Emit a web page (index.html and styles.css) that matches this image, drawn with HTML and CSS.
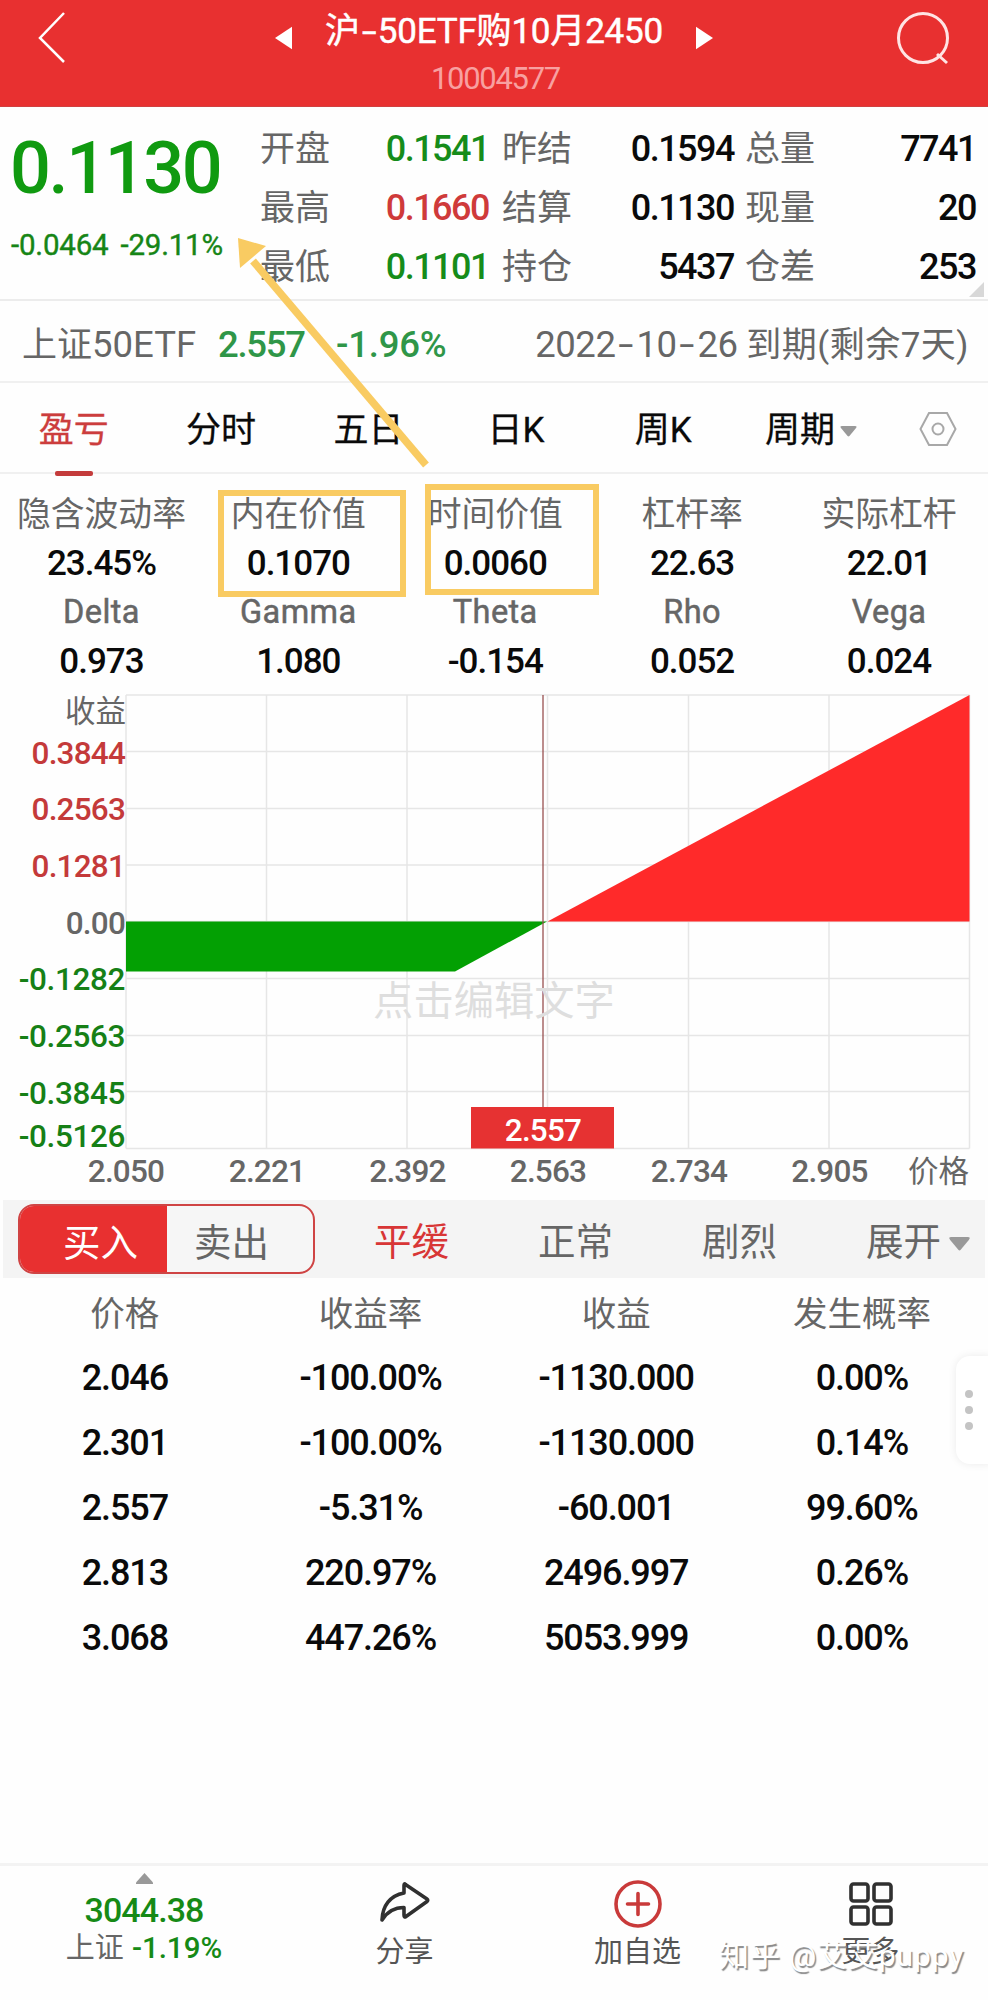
FILE: index.html
```html
<!DOCTYPE html>
<html lang="zh-CN">
<head>
<meta charset="utf-8">
<title>沪-50ETF购10月2450</title>
<link rel="stylesheet" href="styles.css">
</head>
<body>
<div class="screen">
  <header class="topbar">
    <svg class="back" viewBox="0 0 30 54"><path d="M27 2 3 27 27 51"/></svg>
    <div class="heading">
      <div class="title-row">
        <svg class="tri" viewBox="0 0 18 24"><path d="M18 0v24L0 12z"/></svg>
        <h1 class="title">沪<span class="dash">-</span>50ETF购10月2450</h1>
        <svg class="tri" viewBox="0 0 18 24"><path d="M0 0v24l18-12z"/></svg>
      </div>
      <div class="code">10004577</div>
    </div>
    <svg class="search" viewBox="0 0 54 54"><circle cx="27" cy="27" r="24.5"/><path d="m41 43 10 9"/></svg>
  </header>

  <section class="quote">
    <div class="price-block">
      <div class="price">0.1130</div>
      <div class="change"><span>-0.0464</span><span>-29.11%</span></div>
    </div>
    <dl class="stats">
      <dt>开盘</dt><dd class="down">0.1541</dd><dt>昨结</dt><dd>0.1594</dd><dt>总量</dt><dd>7741</dd>
      <dt>最高</dt><dd class="up">0.1660</dd><dt>结算</dt><dd>0.1130</dd><dt>现量</dt><dd>20</dd>
      <dt>最低</dt><dd class="down">0.1101</dd><dt>持仓</dt><dd>5437</dd><dt>仓差</dt><dd>253</dd>
    </dl>
    <svg class="corner" viewBox="0 0 15 15"><path d="M15 0v15H0z"/></svg>
  </section>

  <section class="underlying">
    <span class="u-name">上证<span class="latin">50ETF</span></span>
    <span class="u-price">2.557</span>
    <span class="u-rate">-1.96%</span>
    <span class="u-expiry"><span class="u-date">2022<span class="dash">-</span>10<span class="dash">-</span>26</span> <span class="u-left">到期(剩余7天)</span></span>
  </section>

  <nav class="tabs">
    <span class="tab active">盈亏</span>
    <span class="tab">分时</span>
    <span class="tab">五日</span>
    <span class="tab">日K</span>
    <span class="tab">周K</span>
    <span class="tab period">周期<svg class="caret" viewBox="0 0 18 12"><path d="M2 0h14q3 0 1 2.500l-7 8.500q-1 1-2 0l-7-8.500Q-1 0 2 0z"/></svg></span>
    <svg class="hex" viewBox="0 0 38 36"><path d="M10 2h18l8.500 16L28 34H10L1.500 18z"/><circle cx="19" cy="18" r="5.500"/></svg>
  </nav>

  <section class="metrics">
    <span class="label">隐含波动率</span><span class="label">内在价值</span><span class="label">时间价值</span><span class="label">杠杆率</span><span class="label">实际杠杆</span>
    <span class="num">23.45%</span><span class="num">0.1070</span><span class="num">0.0060</span><span class="num">22.63</span><span class="num">22.01</span>
    <span class="label en">Delta</span><span class="label en">Gamma</span><span class="label en">Theta</span><span class="label en">Rho</span><span class="label en">Vega</span>
    <span class="num">0.973</span><span class="num">1.080</span><span class="num">-0.154</span><span class="num">0.052</span><span class="num">0.024</span>
  </section>

  <svg class="chart" viewBox="0 686 988 514">
    <path class="grid" d="M126 695H969.500M126 751.500H969.500M126 808.500H969.500M126 865H969.500M126 921.500H969.500M126 978.500H969.500M126 1035.500H969.500M126 1091.500H969.500M126 1148.500H969.500M126 695V1148.500M266.500 695V1148.500M407 695V1148.500M547.500 695V1148.500M688.500 695V1148.500M829 695V1148.500M969.500 695V1148.500"/>
    <path class="loss" d="M126 921.500H547L455 971.500H126z"/>
    <path class="gain" d="M547.500 921.500 969.500 695V921.500z"/>
    <path class="cursor" d="M543 695V1108"/>
    <text class="ghost" x="494" y="1015">点击编辑文字</text>
    <rect class="badge" x="471" y="1107" width="143" height="41.500"/>
    <text class="badge-text" x="543" y="1141">2.557</text>
    <g class="yaxis">
      <text class="cjk" x="126" y="722">收益</text>
      <text class="pos" x="125" y="764">0.3844</text>
      <text class="pos" x="125" y="820">0.2563</text>
      <text class="pos" x="125" y="877">0.1281</text>
      <text x="125" y="934">0.00</text>
      <text class="neg" x="125" y="990">-0.1282</text>
      <text class="neg" x="125" y="1047">-0.2563</text>
      <text class="neg" x="125" y="1104">-0.3845</text>
      <text class="neg" x="125" y="1147">-0.5126</text>
    </g>
    <g class="xaxis">
      <text x="126" y="1182">2.050</text>
      <text x="267" y="1182">2.221</text>
      <text x="407.500" y="1182">2.392</text>
      <text x="548" y="1182">2.563</text>
      <text x="689" y="1182">2.734</text>
      <text x="829.500" y="1182">2.905</text>
      <text class="cjk" x="938.500" y="1182">价格</text>
    </g>
  </svg>

  <section class="modes">
    <div class="segment"><span class="buy">买入</span><span class="sell">卖出</span></div>
    <span class="mode on">平缓</span>
    <span class="mode">正常</span>
    <span class="mode">剧烈</span>
    <span class="mode expand">展开<svg class="caret big" viewBox="0 0 18 12"><path d="M2 0h14q3 0 1 2.500l-7 8.500q-1 1-2 0l-7-8.500Q-1 0 2 0z"/></svg></span>
  </section>

  <section class="table">
    <div class="row head"><span>价格</span><span>收益率</span><span>收益</span><span>发生概率</span></div>
    <div class="row"><span>2.046</span><span>-100.00%</span><span>-1130.000</span><span>0.00%</span></div>
    <div class="row"><span>2.301</span><span>-100.00%</span><span>-1130.000</span><span>0.14%</span></div>
    <div class="row"><span>2.557</span><span>-5.31%</span><span>-60.001</span><span>99.60%</span></div>
    <div class="row"><span>2.813</span><span>220.97%</span><span>2496.997</span><span>0.26%</span></div>
    <div class="row"><span>3.068</span><span>447.26%</span><span>5053.999</span><span>0.00%</span></div>
  </section>

  <footer class="bottom">
    <div class="index">
      <svg class="up-caret" viewBox="0 0 17 11"><path d="M8.500 0 17 9.500V11H0V9.500z"/></svg>
      <div class="index-value">3044.38</div>
      <div class="index-rate"><span>上证</span><b>-1.19%</b></div>
    </div>
    <div class="action share">
      <svg viewBox="0 0 50 48"><path d="M25.500 4.500Q24 3 24 5.500V13C10 15.500 2.500 26 2 40c5-8 12-12.500 22-12.500V35q0 3 2 1.500L47 21.500q1.500-1.500 0-2.500z"/></svg>
      <span>分享</span>
    </div>
    <div class="action add">
      <svg viewBox="0 0 50 48"><circle cx="25" cy="24" r="22"/><path d="M25 13.500v21M14.500 24h21"/></svg>
      <span>加自选</span>
    </div>
    <div class="action more">
      <svg viewBox="0 0 50 48"><rect x="5" y="4" width="17" height="17" rx="2.500"/><rect x="28" y="4" width="17" height="17" rx="2.500"/><rect x="5" y="27" width="17" height="17" rx="2.500"/><rect x="28" y="27" width="17" height="17" rx="2.500"/></svg>
      <span>更多</span>
    </div>
  </footer>

  <div class="handle"><i></i><i></i><i></i></div>
  <div class="mark intrinsic"></div>
  <div class="mark time"></div>
  <svg class="arrow" viewBox="0 0 200 240"><path class="shaft" d="M190 230 17 26"/><path class="tip" d="M2 3 30 11 4 33z"/></svg>
  <div class="watermark">知乎 @艾艾puppy</div>
</div>
</body>
</html>
```
FILE: styles.css
```css
* { box-sizing: border-box; }
body { margin: 0; background: #fff; }
.screen {
  position: relative;
  width: 988px;
  height: 2000px;
  overflow: hidden;
  background: #fefefe;
  color: #0a0a0a;
  font-family: Roboto, "Noto Sans CJK SC", sans-serif;
  font-size: 35px;
  line-height: 1;
  white-space: nowrap;
  display: flex;
  flex-direction: column;
}
.screen > * { flex-shrink: 0; }
svg { display: block; }
.dash { display: inline-block; width: 21px; text-align: center; transform: scaleX(1.5); }

/* header */
.topbar { height: 107px; background: #e83030; border-bottom: 1px solid #d04040; color: #fff; display: flex; justify-content: space-between; padding: 11px 38px 0 37px; }
.back { width: 30px; height: 54px; fill: none; stroke: #fff; stroke-width: 2.5; }
.search { width: 54px; height: 54px; fill: none; stroke: #ffe4e4; stroke-width: 3; }
.heading { display: flex; flex-direction: column; align-items: center; margin-left: 25px; }
.title-row { display: flex; align-items: center; justify-content: space-between; width: 438px; height: 42px; }
.title { margin: 0; font-size: 35px; font-weight: 400; -webkit-text-stroke: .5px #fff; letter-spacing: -.2px; line-height: 44px; }
.title .dash { width: 18px; }
.tri { width: 17px; height: 24px; fill: #fff; margin-top: 12px; }
.code { font-size: 31px; letter-spacing: -1.3px; line-height: 34px; margin-top: 9px; padding-left: 3px; color: #f8a0a0; }

/* quote */
.quote { position: relative; height: 194px; border-bottom: 2px solid #ececec; display: flex; }
.price-block { width: 260px; padding-left: 10px; color: #109a10; }
.price { font-size: 72px; font-weight: 500; letter-spacing: -2.4px; line-height: 72px; margin-top: 26px; }
.change { display: flex; gap: 12px; padding-left: 1px; font-size: 29.500px; -webkit-text-stroke: .4px #168516; letter-spacing: -.2px; line-height: 34px; margin-top: 23px; color: #168516; }
.stats { margin: 13px 0 0; display: grid; grid-template-columns: 70px 159px 84px 161px 82px 160px; grid-auto-rows: 59px; line-height: 59px; }
.stats dt { color: #666; }
.stats dt:nth-of-type(3n+2) { padding-left: 13px; }
.stats dt:nth-of-type(3n) { padding-left: 11px; }
.stats dd { margin: 0; text-align: right; font-size: 36px; font-weight: 500; letter-spacing: -1.5px; }
.stats .down { color: #168c1a; }
.stats .up { color: #cf3a3a; }
.corner { position: absolute; right: 4px; bottom: 2px; width: 15px; height: 15px; fill: #d8d8d8; }

/* underlying */
.underlying { height: 82px; border-bottom: 2px solid #f0f0f0; display: flex; align-items: center; padding: 8px 19px 0 22px; color: #666; }
.u-name { width: 196px; }
.latin { font-size: 36.500px; }
.u-price { width: 118px; color: #2f9648; font-size: 36.500px; font-weight: 500; letter-spacing: -1.3px; }
.u-rate { color: #2f9648; font-size: 36.500px; font-weight: 500; letter-spacing: -.2px; }
.u-expiry { margin-left: auto; }
.u-date { font-size: 36.500px; letter-spacing: -.5px; }
.u-left { letter-spacing: .5px; }

/* tabs */
.tabs { height: 91px; border-bottom: 2px solid #f0f0f0; display: flex; align-items: center; padding: 5px 0 0; }
.tab { position: relative; width: 147.400px; text-align: center; line-height: 87px; -webkit-text-stroke: .3px currentColor; }
.tab.active { color: #cc3d3d; }
.tab.active::after { content: ""; position: absolute; left: 55px; bottom: -2px; width: 38px; height: 5px; border-radius: 2px; background: #c43c3c; }
.tab.period { display: flex; width: 170px; padding-left: 28px; align-items: center; }
.caret { width: 17px; height: 11px; margin: 3px 0 0 5px; fill: #999; }
.hex { width: 38px; height: 36px; margin-left: 12px; margin-top: -2px; fill: none; stroke: #a8a8a8; stroke-width: 2; }

/* greeks */
.metrics { display: grid; grid-template-columns: repeat(5, 196.900px); grid-auto-rows: 49px; line-height: 49px; text-align: center; padding: 16px 0 0 3px; height: 213px; }
.label { color: #666; font-size: 33.8px; }
.label.en { font-size: 32.5px; letter-spacing: .4px; -webkit-text-stroke: .5px #666; }
.num { font-weight: 500; letter-spacing: -1px; }

/* chart */
.chart { width: 988px; height: 514px; margin-top: -1px; }
.chart text { font-size: 31.5px; letter-spacing: -.5px; }
.chart .yaxis text, .chart .xaxis text, .chart .badge-text { font-weight: 500; letter-spacing: -.8px; }
.grid { fill: none; stroke: #e6e6e6; stroke-width: 1.5; }
.loss { fill: #03a003; }
.gain { fill: #ff2a2a; }
.cursor { fill: none; stroke: #985050; stroke-width: 1.3; }
.badge { fill: #e63232; }
.chart .badge-text { fill: #fff; text-anchor: middle; }
.chart .ghost { fill: #dedede; text-anchor: middle; font-size: 40.3px; letter-spacing: 0; }
.yaxis { text-anchor: end; fill: #666; }
.xaxis { text-anchor: middle; fill: #666; }
.chart g .cjk.cjk { font-size: 30.5px; letter-spacing: 0; font-weight: 400; }
.chart .pos { fill: #c43a3a; }
.chart .yaxis .neg { fill: #168016; letter-spacing: -.4px; }

/* mode bar */
.modes { height: 78px; margin: 0 3px 0; background: #f4f4f4; display: flex; align-items: center; padding: 0 14px 0 15px; font-size: 37.500px; color: #666; }
.segment { width: 297px; height: 70px; margin-right: 59px; margin-top: -1px; border: 2px solid #cf4444; border-radius: 16px; overflow: hidden; display: flex; line-height: 74px; background: #f6f6f6; }
.buy { width: 147px; padding-left: 43px; background: #e83030; color: #fff; }
.sell { padding-left: 27px; }
.mode { width: 164px; line-height: 74px; margin-top: 6px; }
.mode.on { color: #d83636; }
.mode.expand { display: flex; align-items: center; width: auto; }
.caret.big { width: 21px; height: 14px; margin-left: 8px; }

/* scenarios */
.table { padding: 3px 2px 0; height: 585px; }
.row { display: grid; grid-template-columns: repeat(4, 245.700px); text-align: center; height: 64.900px; line-height: 65px; font-size: 36px; font-weight: 500; letter-spacing: -1.1px; }
.row.head { color: #666; font-size: 34.500px; font-weight: 400; letter-spacing: 0; height: 65px; line-height: 66px; }

/* footer */
.bottom { height: 137px; border-top: 3px solid #f3f3f3; display: flex; font-size: 29px; color: #555; }
.index { width: 288px; display: flex; flex-direction: column; align-items: center; color: #168a16; padding-top: 7px; }
.up-caret { width: 17px; height: 11px; fill: #999; }
.index-value { font-size: 34px; font-weight: 500; letter-spacing: -.9px; line-height: 40px; margin-top: 6px; }
.index-rate { display: flex; gap: 8px; line-height: 36px; }
.index-rate span { color: #666; }
.index-rate b { font-weight: 500; letter-spacing: 0; font-size: 29.500px; }
.action { display: flex; flex-direction: column; align-items: center; padding-top: 14px; line-height: 38px; }
.action svg { width: 50px; height: 48px; fill: none; stroke: #303030; stroke-width: 3.6; stroke-linejoin: round; stroke-linecap: round; }
.action span { margin-top: 5px; }
.share { width: 233px; }
.add { width: 233px; }
.more { width: 233px; }
.add svg { stroke: #c93a3a; }

/* overlays */
.handle { position: absolute; left: 956px; top: 1356px; width: 36px; height: 108px; border-radius: 14px 0 0 14px; background: #fff; box-shadow: 0 0 8px rgba(0,0,0,.08); display: flex; flex-direction: column; align-items: center; justify-content: center; gap: 8px; padding-right: 10px; }
.handle i { width: 8px; height: 8px; border-radius: 50%; background: #c4c4c4; }
.mark { position: absolute; border: 6px solid #f9cb62; }
.intrinsic { left: 218px; top: 490px; width: 188px; height: 107px; }
.time { left: 425px; top: 484px; width: 174px; height: 111px; }
.arrow { position: absolute; left: 236px; top: 235px; width: 200px; height: 240px; }
.shaft { stroke: #f9cb62; stroke-width: 7.5; fill: none; }
.tip { fill: #f9cb62; }
.watermark { position: absolute; left: 719px; top: 1938px; font-size: 30px; letter-spacing: .9px; line-height: 36px; color: #fff; text-shadow: 1.5px 1.5px 1px #888; }
```
